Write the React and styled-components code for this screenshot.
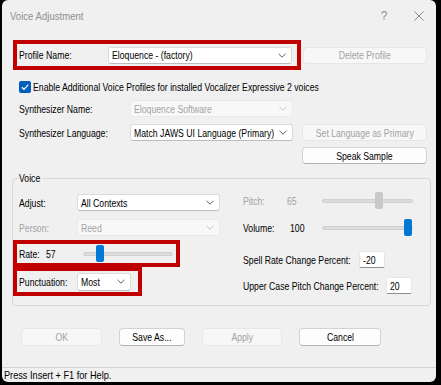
import React from 'react';
import styled, { createGlobalStyle } from 'styled-components';

const FONT = `"Liberation Sans Narrow", "Arial Narrow", "Liberation Sans", Arial, sans-serif`;

const Global = createGlobalStyle`
  html, body { margin: 0; padding: 0; background: #000; }
  body { width: 441px; height: 385px; overflow: hidden; font-family: ${FONT}; }
  *, *::before, *::after { box-sizing: border-box; }
`;

/* Narrow rendering of text: the dialog uses a condensed face */
const T = styled.span`
  display: inline-block;
  white-space: nowrap;
  transform: scaleX(0.82);
  transform-origin: ${(p) => (p.$center ? 'center' : 'left')} center;
`;

const Window = styled.div`
  margin-left: 2px;
  width: 434px;
  height: 382px;
  background: #f0f0f0;
  border-radius: 6px;
  display: flex;
  flex-direction: column;
  overflow: hidden;
  font-size: 10.6px;
  color: #000;
`;

const TitleBar = styled.div`
  height: 32px;
  flex: none;
  display: flex;
  align-items: center;
  padding: 0 12px 1px 8px;
  color: #8f8f8f;
`;

const Title = styled.div`
  flex: 1;
  font-size: 11.7px;
`;

const Help = styled.span`
  width: 12px;
  text-align: center;
  font-size: 12px;
`;

const CloseIcon = styled.svg`
  margin-left: 24px;
  display: block;
`;

const Content = styled.div`
  flex: 1;
  display: flex;
  flex-direction: column;
  padding: 8px 9px 0 17px;
`;

const Row = styled.div`
  display: flex;
  align-items: center;
  flex: none;
  height: ${(p) => p.$h || 17}px;
  margin-top: ${(p) => p.$mt || 0}px;
  margin-left: ${(p) => p.$ml || 0}px;
  justify-content: ${(p) => (p.$end ? 'flex-end' : 'flex-start')};
`;

const Highlight = styled.div`
  display: flex;
  align-items: center;
  flex: none;
  border: 4px solid #c00000;
  width: ${(p) => p.$w}px;
  height: ${(p) => p.$h}px;
  margin-left: -6px;
  margin-top: ${(p) => p.$mt || 0}px;
  padding-left: 2px;
`;

const LabelBox = styled.span`
  flex: none;
  width: ${(p) => (p.$w ? `${p.$w}px` : 'auto')};
  white-space: nowrap;
  color: ${(p) => (p.$disabled ? '#a3a3a3' : '#000')};
`;

const Label = ({ w, disabled, children }) => (
  <LabelBox $w={w} $disabled={disabled}>
    <T>{children}</T>
  </LabelBox>
);

const ComboBox = styled.div`
  flex: none;
  width: ${(p) => p.$w}px;
  height: ${(p) => p.$h || 17}px;
  display: flex;
  align-items: center;
  padding: 0 5px 0 3px;
  border-radius: 3px;
  background: ${(p) => (p.$disabled ? '#f8f8f8' : '#fff')};
  border: 1px solid ${(p) => (p.$disabled ? '#e9e9e9' : '#dadada')};
  border-bottom-color: ${(p) => (p.$disabled ? '#e9e9e9' : '#bcbcbc')};
  color: ${(p) => (p.$disabled ? '#a3a3a3' : '#000')};
`;

const ComboText = styled.span`
  flex: 1 1 0;
  min-width: 0;
  white-space: nowrap;
`;

const ChevronIcon = styled.svg`
  flex: none;
  display: block;
`;

const Chevron = ({ disabled }) => (
  <ChevronIcon width="8" height="5" viewBox="0 0 8 5">
    <path d="M0.5 0.8 L4 4.2 L7.5 0.8" fill="none" stroke={disabled ? '#c4c4c4' : '#606060'} strokeWidth="1" />
  </ChevronIcon>
);

const Combo = ({ w, h, disabled, children }) => (
  <ComboBox $w={w} $h={h} $disabled={disabled}>
    <ComboText>
      <T>{children}</T>
    </ComboText>
    <Chevron disabled={disabled} />
  </ComboBox>
);

const ButtonBox = styled.button`
  flex: none;
  font: inherit;
  padding: 0;
  width: ${(p) => p.$w}px;
  height: ${(p) => p.$h || 17}px;
  margin-left: ${(p) => p.$ml || 0}px;
  display: flex;
  align-items: center;
  justify-content: center;
  border-radius: 4px;
  border: 1px solid ${(p) => (p.$disabled ? '#e6e6e6' : '#d2d2d2')};
  border-bottom-color: ${(p) => (p.$disabled ? '#e6e6e6' : '#b3b3b3')};
  background: ${(p) => (p.$disabled ? '#f7f7f7' : '#fdfdfd')};
  color: ${(p) => (p.$disabled ? '#a3a3a3' : '#000')};
`;

const Button = ({ w, h, ml, disabled, children }) => (
  <ButtonBox $w={w} $h={h} $ml={ml} $disabled={disabled}>
    <T $center>{children}</T>
  </ButtonBox>
);

const CheckBox = styled.span`
  flex: none;
  width: 12px;
  height: 12px;
  border-radius: 2px;
  background: #005fb8;
  display: flex;
  align-items: center;
  justify-content: center;
  margin-right: 2px;
`;

const Group = styled.fieldset`
  margin: 8px -4px 0 -7px;
  padding: 0 0 9px 6px;
  border: 1px solid #d8d8d8;
  border-radius: 4px;
  min-width: 0;
`;

const Legend = styled.legend`
  width: 24px;
  padding: 0;
  line-height: 13px;
  font-size: 10.6px;
  white-space: nowrap;
`;

const GroupBody = styled.div`
  display: flex;
`;

const Column = styled.div`
  display: flex;
  flex-direction: column;
  width: ${(p) => (p.$w ? `${p.$w}px` : 'auto')};
  flex: none;
`;

const SliderBox = styled.div`
  position: relative;
  flex: none;
  width: ${(p) => p.$w}px;
  height: 17px;
  display: flex;
  align-items: center;
`;

const Track = styled.div`
  width: 100%;
  height: 4px;
  border-radius: 2px;
  background: #dcdcdc;
  border: 1px solid #d0d0d0;
`;

const Thumb = styled.div`
  position: absolute;
  top: 0;
  width: 8px;
  height: 17px;
  border-radius: 2px;
  background: ${(p) => (p.$disabled ? '#c9c9c9' : '#0078d4')};
`;

const Slider = ({ w, pos, disabled }) => (
  <SliderBox $w={w}>
    <Track />
    <Thumb $disabled={disabled} style={{ left: Math.round(pos * (w - 8)) }} />
  </SliderBox>
);

const Edit = styled.div`
  flex: none;
  width: 26px;
  height: 17px;
  display: flex;
  align-items: center;
  padding-left: 3px;
  background: #fff;
  border: 1px solid #e6e6e6;
  border-bottom-color: #8d8d8d;
  border-radius: 2px;
  overflow: hidden;
`;

const StatusBar = styled.div`
  flex: none;
  height: 15px;
  border-top: 1px solid #d2d2d2;
  padding-left: 2px;
  font-size: 11.2px;
  line-height: 14px;
  color: #000;
`;

export default function App() {
  return (
    <>
      <Global />
      <Window>
        <TitleBar>
          <Title>
            <T>Voice Adjustment</T>
          </Title>
          <Help>?</Help>
          <CloseIcon width="10" height="10" viewBox="0 0 10 10">
            <path d="M0.5 0.5 L9.5 9.5 M9.5 0.5 L0.5 9.5" stroke="#8a8a8a" strokeWidth="1" />
          </CloseIcon>
        </TitleBar>
        <Content>
          <Row $h={30}>
            <Highlight $w={288} $h={30}>
              <Label w={89}>Profile Name:</Label>
              <Combo w={184}>Eloquence - (factory)</Combo>
            </Highlight>
            <Button w={124} ml={2} disabled>Delete Profile</Button>
          </Row>
          <Row $h={14} $mt={10}>
            <CheckBox>
              <svg width="10" height="10" viewBox="0 0 10 10">
                <path d="M1.8 5.2 L4 7.3 L8.3 2.6" fill="none" stroke="#fff" strokeWidth="1.2" />
              </svg>
            </CheckBox>
            <Label>Enable Additional Voice Profiles for installed Vocalizer Expressive 2 voices</Label>
          </Row>
          <Row $mt={6}>
            <Label w={111}>Synthesizer Name:</Label>
            <Combo w={163} disabled>Eloquence Software</Combo>
          </Row>
          <Row $mt={7}>
            <Label w={111}>Synthesizer Language:</Label>
            <Combo w={163}>Match JAWS UI Language (Primary)</Combo>
            <Button w={125} ml={9} disabled>Set Language as Primary</Button>
          </Row>
          <Row $mt={6} $end>
            <Button w={125}>Speak Sample</Button>
          </Row>
          <Group>
            <Legend>
              <T>Voice</T>
            </Legend>
            <GroupBody>
              <Column $w={224}>
                <Row $mt={9}>
                  <Label w={58}>Adjust:</Label>
                  <Combo w={143}>All Contexts</Combo>
                </Row>
                <Row $mt={8}>
                  <Label w={58} disabled>Person:</Label>
                  <Combo w={143} disabled>Reed</Combo>
                </Row>
                <Highlight $w={167} $h={27} $mt={4}>
                  <Label w={27}>Rate:</Label>
                  <Label w={37}>57</Label>
                  <Slider w={90} pos={0.159} />
                </Highlight>
                <Highlight $w={129} $h={29}>
                  <Label w={58}>Punctuation:</Label>
                  <Combo w={54} h={18}>Most</Combo>
                </Highlight>
              </Column>
              <Column>
                <Row $mt={7}>
                  <Label w={44} disabled>Pitch:</Label>
                  <Label w={35} disabled>65</Label>
                  <Slider w={91} pos={0.64} disabled />
                </Row>
                <Row $mt={10}>
                  <Label w={47}>Volume:</Label>
                  <Label w={32}>100</Label>
                  <Slider w={91} pos={0.99} />
                </Row>
                <Row $mt={15}>
                  <Label w={116}>Spell Rate Change Percent:</Label>
                  <Edit>
                    <T>-20</T>
                  </Edit>
                </Row>
                <Row $mt={9}>
                  <Label w={143}>Upper Case Pitch Change Percent:</Label>
                  <Edit>
                    <T>20</T>
                  </Edit>
                </Row>
              </Column>
            </GroupBody>
          </Group>
          <Row $h={18} $mt={22} $ml={2}>
            <Button w={81} h={18} disabled>OK</Button>
            <Button w={66} h={18} ml={17}>Save As...</Button>
            <Button w={80} h={18} ml={17} disabled>Apply</Button>
            <Button w={82} h={18} ml={17}>Cancel</Button>
          </Row>
        </Content>
        <StatusBar>
          <T>Press Insert + F1 for Help.</T>
        </StatusBar>
      </Window>
    </>
  );
}
